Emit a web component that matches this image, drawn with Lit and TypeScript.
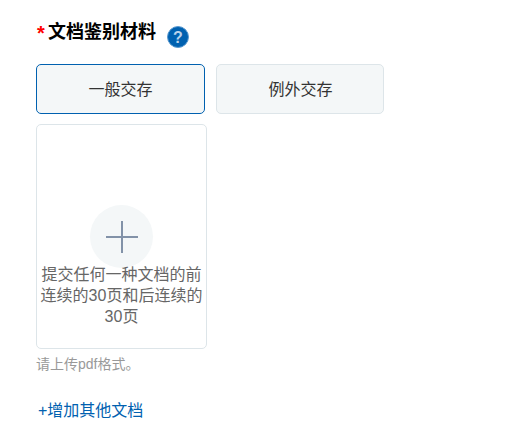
import { LitElement, html, css } from "lit";
import { customElement } from "lit/decorators.js";

@customElement("app-root")
class AppRoot extends LitElement {
  static styles = css`
    :host {
      display: block;
      width: 522px;
      height: 443px;
      box-sizing: border-box;
      padding: 20px 0 0 36px;
      background: #fff;
      font-family: "Liberation Sans", "Noto Sans CJK SC", sans-serif;
      overflow: hidden;
    }
    .head {
      display: flex;
      align-items: flex-start;
      height: 32px;
      margin-bottom: 12px;
    }
    .star {
      color: #f00;
      font-size: 20px;
      font-weight: 700;
      line-height: 24px;
      width: 12px;
      margin-left: 1px;
      margin-top: 1px;
    }
    .title {
      font-size: 18px;
      font-weight: 700;
      color: #000;
      line-height: 24px;
      margin-left: -1px;
    }
    .help {
      margin-left: 11px;
      margin-top: 6px;
      width: 22px;
      height: 22px;
    }
    .tabs {
      display: flex;
      gap: 11px;
      margin-bottom: 10px;
    }
    .tab {
      box-sizing: border-box;
      width: 169px;
      height: 50px;
      display: flex;
      align-items: center;
      justify-content: center;
      background: #f4f7f8;
      border: 1px solid #dde5e9;
      border-radius: 5px;
      font-size: 16px;
      color: #333;
      padding-bottom: 2px;
    }
    .tab.on {
      border-color: #0061b0;
    }
    .tab.other {
      width: 168px;
      padding-left: 1px;
    }
    .upload {
      box-sizing: border-box;
      width: 171px;
      height: 225px;
      border: 1px solid #dde5e9;
      border-radius: 5px;
      padding: 80px 2px 0;
      display: flex;
      flex-direction: column;
      align-items: center;
    }
    .circle {
      width: 63px;
      height: 63px;
      border-radius: 50%;
      background: #f4f7f8;
      display: flex;
      align-items: center;
      justify-content: center;
      flex: none;
    }
    .desc {
      font-size: 16px;
      line-height: 21px;
      color: #666;
      text-align: center;
      margin-top: -4px;
    }
    .hint {
      font-size: 14px;
      line-height: 18px;
      color: #999;
      margin-top: 6px;
    }
    .more {
      font-size: 16px;
      line-height: 22px;
      color: #0061b0;
      margin-top: 27px;
      padding-left: 2px;
    }
  `;

  render() {
    return html`
      <div class="head">
        <span class="star">*</span>
        <span class="title">文档鉴别材料</span>
        <svg class="help" viewBox="0 0 22 22">
          <circle cx="11" cy="11" r="10.5" fill="#0061b0" stroke="#5b9ad0" stroke-width="1"></circle>
          <text x="11" y="16.5" text-anchor="middle" font-size="16" font-weight="700" fill="#b9d3ea" font-family="Liberation Sans, sans-serif">?</text>
        </svg>
      </div>
      <div class="tabs">
        <div class="tab on">一般交存</div>
        <div class="tab other">例外交存</div>
      </div>
      <div class="upload">
        <div class="circle">
          <svg width="32" height="32" viewBox="0 0 32 32">
            <path d="M0 16H32M16 0V32" stroke="#8292a8" stroke-width="2" fill="none"></path>
          </svg>
        </div>
        <div class="desc">提交任何一种文档的前连续的30页和后连续的30页</div>
      </div>
      <div class="hint">请上传pdf格式。</div>
      <div class="more">+增加其他文档</div>
    `;
  }
}
